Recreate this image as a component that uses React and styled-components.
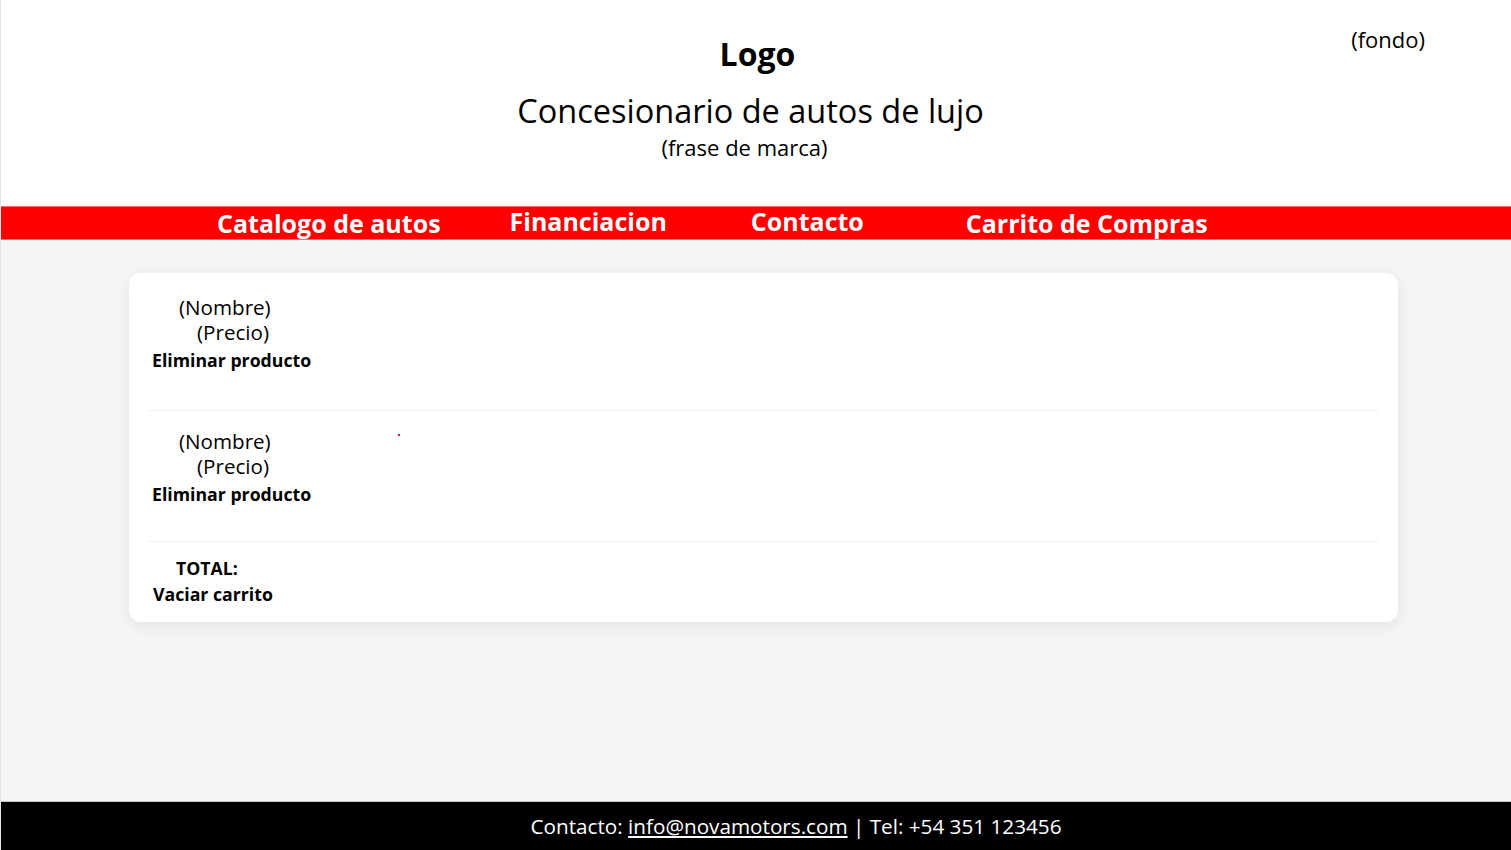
import React from "react";
import styled, { createGlobalStyle } from "styled-components";

const Global = createGlobalStyle`
  html, body { margin: 0; padding: 0; }
  body {
    font-family: "Open Sans", "Liberation Sans", sans-serif;
    background: #f4f5f7;
    color: #000;
  }
`;

const Page = styled.div`
  min-height: 100vh;
  display: flex;
  flex-direction: column;
  border-left: 1px solid #e4e6ea;
  box-sizing: border-box;
`;

const Header = styled.header`
  position: relative;
  background: #fff;
  height: 206px;
  display: flex;
  flex-direction: column;
  align-items: center;
  box-sizing: border-box;
  padding-top: 32px;
`;

const Logo = styled.div`
  font-size: 32px;
  font-weight: 700;
  line-height: 44px;
  margin-left: ${p => p.$shift || 0}px;
`;

const Title = styled.div`
  font-size: 32.5px;
  font-weight: 400;
  line-height: 42px;
  margin-top: 14px;
  margin-left: ${p => p.$shift || 0}px;
`;

const Slogan = styled.div`
  font-size: 22px;
  line-height: 30px;
  margin-top: 0;
  margin-left: ${p => p.$shift || 0}px;
`;

const Fondo = styled.div`
  position: absolute;
  top: 24px;
  right: 86px;
  font-size: 22px;
  line-height: 30px;
`;

const Nav = styled.nav`
  background: #ff0000;
  height: 34px;
  border-top: 1px solid #ff6a6a;
  border-bottom: 1px solid #ff6a6a;
  box-sizing: border-box;
  display: flex;
  align-items: center;
  padding-left: 216px;
`;

const NavItem = styled.a`
  color: #fff;
  font-weight: 700;
  font-size: 25px;
  line-height: 30px;
  text-decoration: none;
  margin-left: ${p => p.$gap || 0}px;
  position: relative;
  top: ${p => p.$dy || 0}px;
`;

const Main = styled.main`
  flex: 1;
  padding: 33px 0 40px 128px;
`;

const Card = styled.section`
  width: 1269px;
  background: #fff;
  border-radius: 12px;
  box-shadow: 0 4px 16px rgba(0, 0, 0, 0.08);
  padding: 3px 19px 0;
  box-sizing: border-box;
`;

const Row = styled.div`
  position: relative;
  display: flex;
  flex-direction: column;
  align-items: flex-start;
  padding: ${p => p.$pad};
  border-bottom: ${p => (p.$last ? "none" : "1px solid #eff0f2")};
`;

const Text = styled.div`
  font-size: 20.6px;
  line-height: 25px;
  margin-left: ${p => p.$indent || 0}px;
`;

const Action = styled.button`
  all: unset;
  font-family: "Open Sans", "Liberation Sans", sans-serif;
  font-weight: 700;
  font-size: 17.7px;
  line-height: ${p => p.$lh || 31}px;
  margin-left: ${p => p.$indent || 0}px;
  cursor: pointer;
`;

const Strong = styled.div`
  font-weight: 700;
  font-size: 17.7px;
  line-height: 26px;
  margin-left: ${p => p.$indent || 0}px;
`;

const Dot = styled.span`
  position: absolute;
  left: 250px;
  top: 23px;
  width: 2px;
  height: 2px;
  background: #e8104a;
`;

const Footer = styled.footer`
  background: #000;
  color: #fff;
  height: 49px;
  display: flex;
  align-items: center;
  justify-content: center;
  padding-left: 80px;
  font-size: 20.7px;
  border-top: 1px solid #c8c8c8;
  box-sizing: border-box;

  a { color: #fff; text-decoration: underline; }
`;

const rows = [
  { id: 1, pad: "19px 0 34px" },
  { id: 2, pad: "18px 0 31px" },
];

export default function App() {
  return (
    <>
      <Global />
      <Page>
        <Header>
          <Logo $shift={3}>Logo</Logo>
          <Title $shift={-11}>Concesionario de autos de lujo</Title>
          <Slogan $shift={-23}>(frase de marca)</Slogan>
          <Fondo>(fondo)</Fondo>
        </Header>
        <Nav>
          <NavItem>Catalogo de autos</NavItem>
          <NavItem $gap={69} $dy={-2}>Financiacion</NavItem>
          <NavItem $gap={84} $dy={-2}>Contacto</NavItem>
          <NavItem $gap={102}>Carrito de Compras</NavItem>
        </Nav>
        <Main>
          <Card>
            {rows.map((r) => (
              <Row key={r.id} $pad={r.pad}>
                {r.id === 2 && <Dot />}
                <Text $indent={31}>(Nombre)</Text>
                <Text $indent={49}>(Precio)</Text>
                <Action $indent={4}>Eliminar producto</Action>
              </Row>
            ))}
            <Row $last $pad="13px 0 15px">
              <Strong $indent={28}>TOTAL:</Strong>
              <Action $indent={5} $lh={26}>Vaciar carrito</Action>
            </Row>
          </Card>
        </Main>
        <Footer>
          <span>
            Contacto: <a href="#">info@novamotors.com</a> | Tel: +54 351 123456
          </span>
        </Footer>
      </Page>
    </>
  );
}
